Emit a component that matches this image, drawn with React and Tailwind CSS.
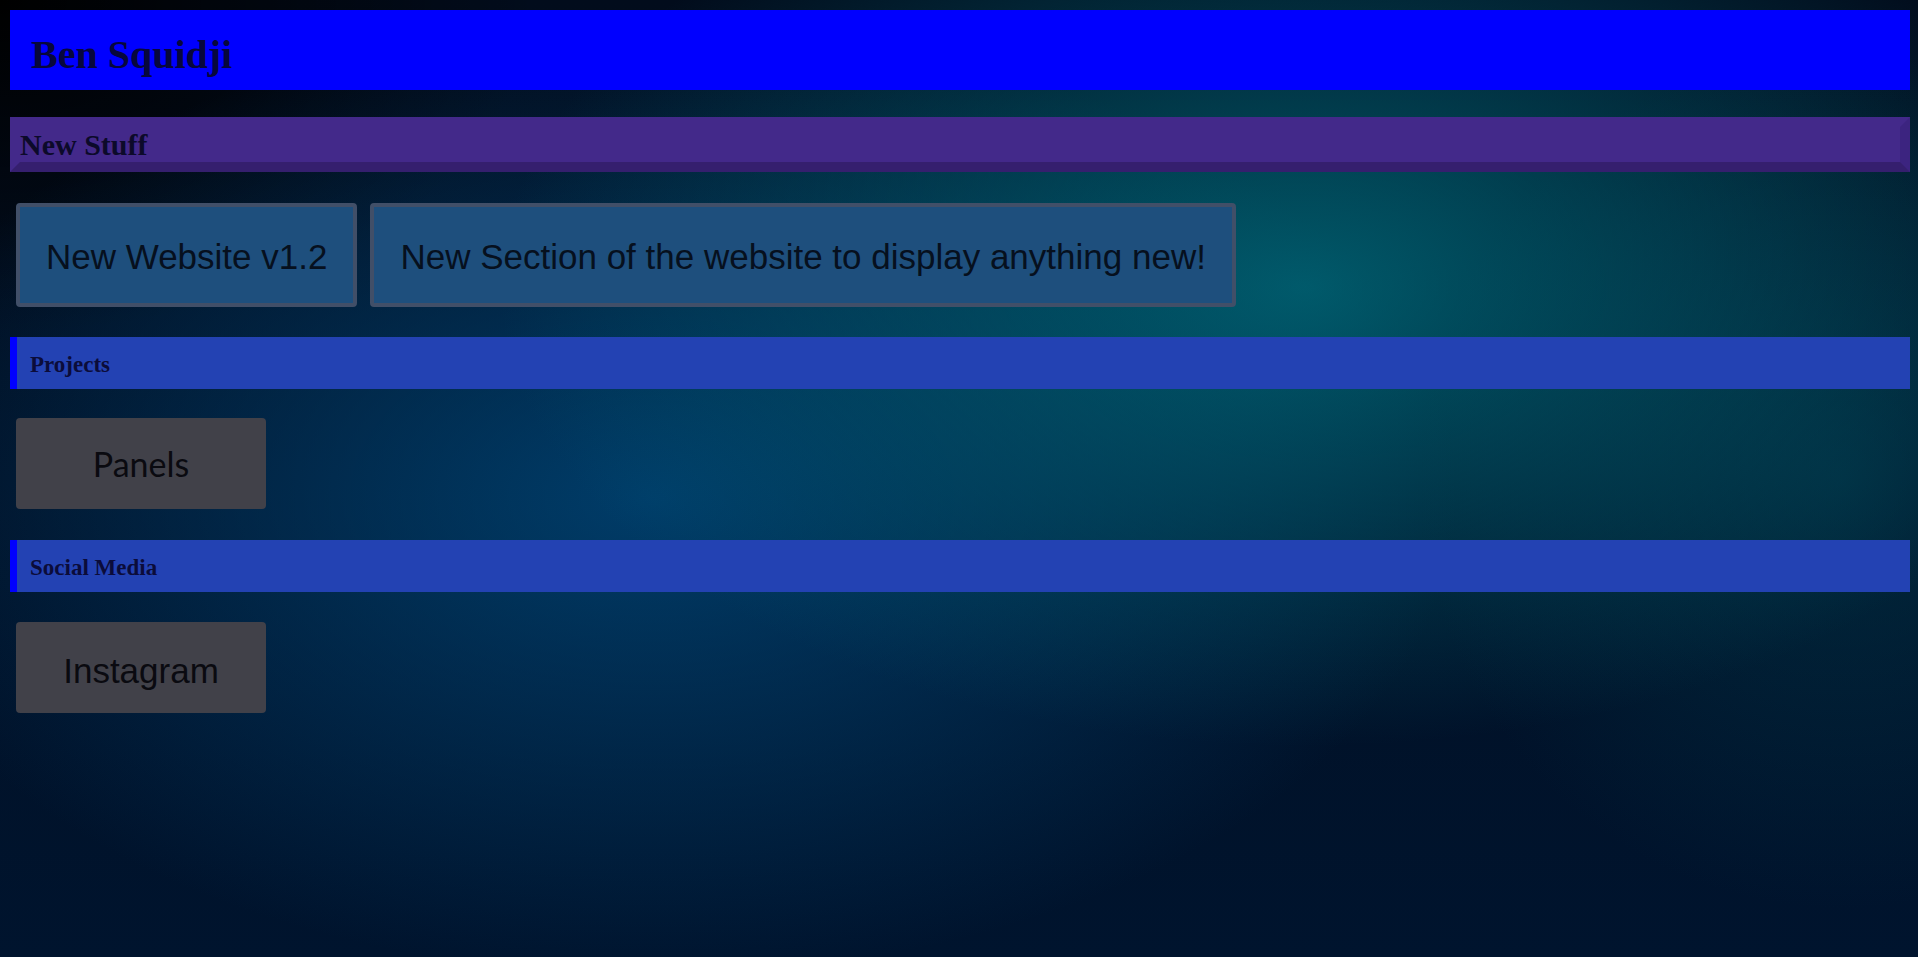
import React from "react";

const serif = "font-['Liberation_Serif',serif] font-bold";
const sans = "font-['Liberation_Sans',Arial,sans-serif]";

const SectionBar = ({ title, className = "" }) => (
  <div
    className={`ml-[10px] mr-[8px] h-[52px] flex items-center border-l-[7px] border-[#0000ff] bg-[#2342b3] pl-[13px] pt-[2px] ${className}`}
  >
    <h3 className={`${serif} text-[23px] leading-none text-[#0b0c3a]`}>{title}</h3>
  </div>
);

const NewsCard = ({ children }) => (
  <div
    className={`border-[4px] border-[#414f68] rounded-[4px] bg-[#1e4f7d] pl-[26px] pr-[26px] pt-[30px] pb-[26px] ${sans} text-[35px] leading-[40px] text-[#06101e] whitespace-nowrap`}
  >
    {children}
  </div>
);

const LinkCard = ({ children, font }) => (
  <div
    className={`ml-[16px] w-[250px] h-[91px] rounded-[4px] bg-[#414149] flex items-center justify-center ${font}`}
  >
    {children}
  </div>
);

export default function App() {
  return (
    <div className="min-h-screen w-full flex flex-col overflow-hidden bg-[#001329] bg-[radial-gradient(ellipse_42%_48%_at_68%_30%,rgba(0,108,124,0.8),transparent),radial-gradient(ellipse_42%_50%_at_34%_52%,rgba(0,72,122,0.8),transparent),radial-gradient(ellipse_22%_45%_at_96%_50%,rgba(0,70,88,0.45),transparent),radial-gradient(ellipse_28%_35%_at_0%_0%,#000000,transparent),linear-gradient(180deg,#020c1c,#00142e)]">
      {/* header */}
      <header className="ml-[10px] mr-[8px] mt-[10px] h-[80px] bg-[#0000ff] flex items-center pl-[21px] pt-[10px]">
        <h1 className={`${serif} text-[40px] leading-[46px] text-[#07073c]`}>Ben Squidji</h1>
      </header>

      {/* new stuff */}
      <div className="ml-[10px] mr-[8px] mt-[27px] border-[10px] border-t-[#43298a] border-l-[#43298a] border-r-[#3c2480] border-b-[#351f6e] bg-[#43298a]">
        <h2 className={`${serif} text-[30px] leading-[35px] h-[35px] text-[#0c0a2a]`}>New Stuff</h2>
      </div>

      <div className="mt-[31px] pl-[16px] flex gap-[13px]">
        <NewsCard>New Website v1.2</NewsCard>
        <NewsCard>New Section of the website to display anything new!</NewsCard>
      </div>

      {/* projects */}
      <SectionBar title="Projects" className="mt-[30px]" />
      <div className="mt-[29px]">
        <LinkCard font="font-['Lato',sans-serif] text-[34px] text-[#0a0a10]">Panels</LinkCard>
      </div>

      {/* social */}
      <SectionBar title="Social Media" className="mt-[31px]" />
      <div className="mt-[30px]">
        <LinkCard font={`${sans} text-[35px] leading-[40px] pt-[6px] text-[#0a0a10]`}>Instagram</LinkCard>
      </div>
    </div>
  );
}
